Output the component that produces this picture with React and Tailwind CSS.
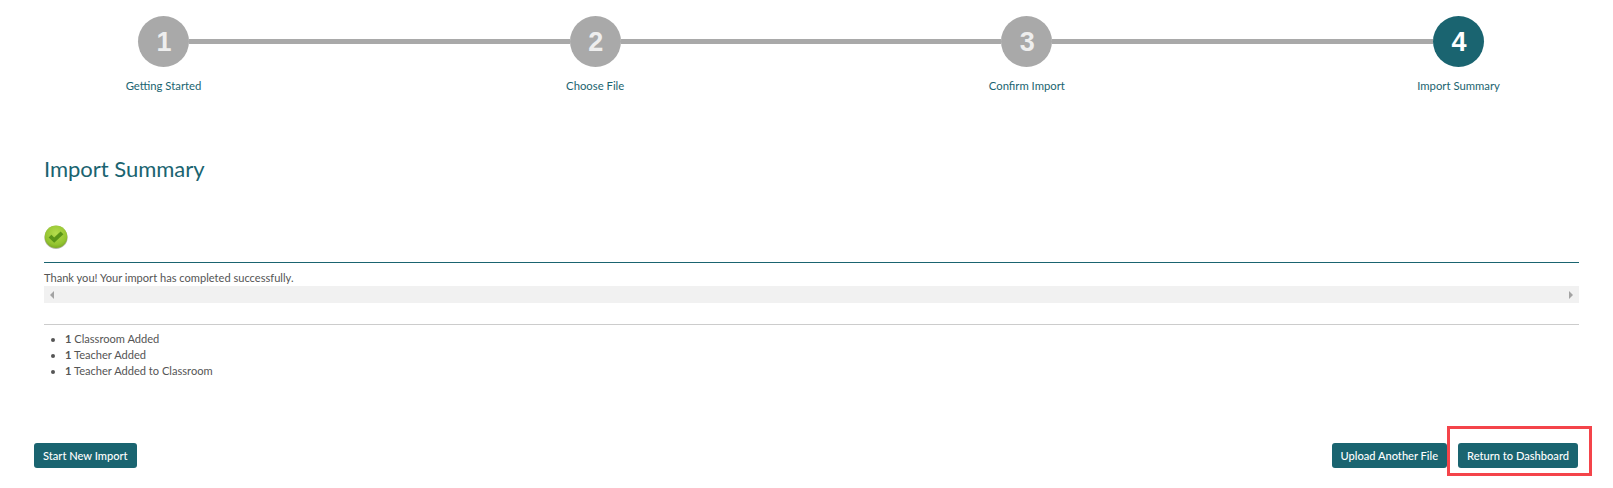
import React from 'react';

const steps = ['Getting Started', 'Choose File', 'Confirm Import', 'Import Summary'];

function Step({ n, label, active }) {
  return (
    <div className="flex flex-col items-center w-[51px] shrink-0">
      <span className={`w-[51px] h-[51px] pt-px pl-px rounded-full grid place-items-center font-['Liberation_Sans',Arial,sans-serif] font-bold text-[27px] leading-none ${active ? 'bg-[#1a6470] text-white' : 'bg-[#a9a9a9] text-[#eeeeee]'}`}>
        {n}
      </span>
      <span className="mt-[11px] text-[11.3px] leading-[16px] whitespace-nowrap text-[#1a6470]">{label}</span>
    </div>
  );
}

function CheckIcon() {
  return (
    <svg width="24" height="24" viewBox="0 0 24 24">
      <defs>
        <radialGradient id="ball" cx="0.5" cy="0.35" r="0.7">
          <stop offset="0" stopColor="#b4dc4c" />
          <stop offset="0.7" stopColor="#94c431" />
          <stop offset="1" stopColor="#74a41e" />
        </radialGradient>
      </defs>
      <circle cx="12" cy="12.4" r="11.6" fill="#b5b5a8" />
      <circle cx="12" cy="11.7" r="11.3" fill="url(#ball)" />
      <path d="M4.6 12.6l2.8-2.8 2.8 2.6 6.4-5.8 2.8 2.7-9.2 8.4z" fill="#5a9418" />
    </svg>
  );
}

function Btn({ children }) {
  return (
    <button className="h-[25px] px-[9px] rounded-[3px] bg-[#1a6470] text-white text-[11.1px] font-medium leading-none whitespace-nowrap">
      {children}
    </button>
  );
}

export default function App() {
  return (
    <div className="relative h-[488px] bg-white overflow-hidden font-['Lato','Open_Sans',sans-serif]">
      <div className="flex pt-4 pl-[138px] pr-[129px]">
        {steps.map((label, i) => (
          <React.Fragment key={label}>
            <Step n={i + 1} label={label} active={i === 3} />
            {i < 3 && <div className="flex-1 h-[5px] mt-[23px] bg-[#a9a9a9]" />}
          </React.Fragment>
        ))}
      </div>

      <div className="pl-[44px] pr-[34px]">
        <h1 className="mt-[60px] text-[22px] leading-[30px] tracking-[-0.03px] text-[#1a6470]">Import Summary</h1>
        <div className="mt-[41px]"><CheckIcon /></div>
        <div className="mt-[13px] border-t-[1.5px] border-[#1a6470]" />
        <p className="mt-[7px] text-[11.1px] leading-[16px] text-[#555555]">Thank you! Your import has completed successfully.</p>
        <div className="flex items-center justify-between h-[17px] px-[6px] bg-[#f1f1f1]">
          <span className="w-0 h-0 border-y-[4px] border-y-transparent border-r-[4px] border-r-[#a3a3a3]" />
          <span className="w-0 h-0 border-y-[4px] border-y-transparent border-l-[4px] border-l-[#a3a3a3]" />
        </div>
        <div className="mt-[21px] border-t-[1.5px] border-[#cccccc]" />
        <ul className="mt-[6px] pl-[21px] list-disc text-[11.1px] leading-[16px] text-[#555555] marker:text-[#555555]">
          <li><b className="font-bold">1</b> Classroom Added</li>
          <li><b className="font-bold">1</b> Teacher Added</li>
          <li><b className="font-bold">1</b> Teacher Added to Classroom</li>
        </ul>
      </div>

      <div className="flex justify-between mt-[64px] pl-[34px] pr-[35px]">
        <Btn>Start New Import</Btn>
        <div className="flex gap-[11px]">
          <Btn>Upload Another File</Btn>
          <Btn>Return to Dashboard</Btn>
        </div>
      </div>

      <div className="absolute left-[1447px] top-[426px] w-[145px] h-[50px] border-[3px] border-[#f4444a]" />
    </div>
  );
}
